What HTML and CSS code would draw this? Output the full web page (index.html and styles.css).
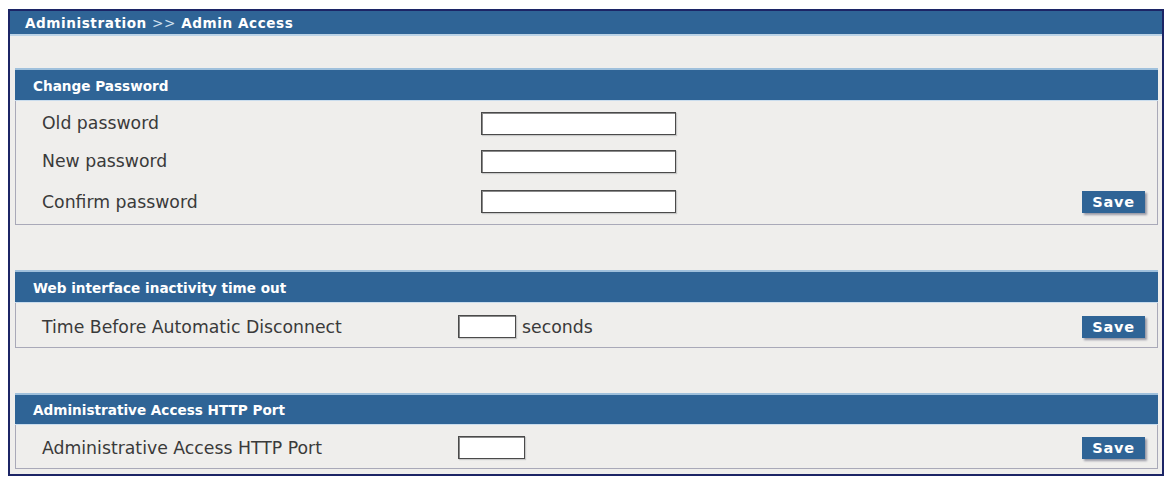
FILE: index.html
```html
<!DOCTYPE html>
<html>
<head>
<meta charset="utf-8">
<link rel="stylesheet" href="styles.css">
</head>
<body>
<div class="frame">
  <div class="title">Administration <span class="sep">&gt;&gt;</span> Admin Access</div>
  <div class="content">
    <div class="section s1">
      <div class="shead">Change Password</div>
      <div class="sbody">
        <div class="row r1"><span class="label">Old password</span><span class="field"><input class="inp wide" type="password"></span><span></span></div>
        <div class="row r2"><span class="label">New password</span><span class="field"><input class="inp wide" type="password"></span><span></span></div>
        <div class="row r3"><span class="label">Confirm password</span><span class="field"><input class="inp wide" type="password"></span><button class="save">Save</button></div>
      </div>
    </div>
    <div class="section s2">
      <div class="shead">Web interface inactivity time out</div>
      <div class="sbody">
        <div class="row narrowcol r4"><span class="label">Time Before Automatic Disconnect</span><span class="field"><input class="inp small" type="text"><span class="unit">seconds</span></span><button class="save">Save</button></div>
      </div>
    </div>
    <div class="section s3">
      <div class="shead">Administrative Access HTTP Port</div>
      <div class="sbody">
        <div class="row narrowcol r5"><span class="label">Administrative Access HTTP Port</span><span class="field"><input class="inp port" type="text"></span><button class="save">Save</button></div>
      </div>
    </div>
  </div>
</div>
</body>
</html>
```
FILE: styles.css
```css
* { box-sizing: border-box; }
html, body { margin: 0; padding: 0; background: #ffffff; }
body { font-family: "DejaVu Sans", Verdana, sans-serif; }

.frame {
  margin: 9px 0 0 8px;
  width: 1156px;
  height: 467px;
  border: 2px solid #1c2566;
  background: #efeeec;
  display: flex;
  flex-direction: column;
}

.title {
  height: 25px;
  background: #2f6496;
  border-bottom: 2px solid #bcd3e6;
  color: #ffffff;
  font-weight: bold;
  font-size: 13.6px;
  letter-spacing: 0.55px;
  padding: 5px 0 0 15px;
  line-height: 15px;
}
.title .sep { color: #cfe0f0; font-weight: normal; }

.content {
  padding: 32px 4px 0 5px;
  display: flex;
  flex-direction: column;
}

.section {
  border: 1px solid #a9a9b8;
  border-top: none;
  background: #efeeec;
}
.s2 { margin-top: 45px; }
.s3 { margin-top: 45px; }

.shead {
  height: 33px;
  background: #2f6496;
  border-top: 2px solid #9fc0dc;
  border-bottom: 1px solid #c9dced;
  margin: 0 -1px;
  color: #ffffff;
  font-weight: bold;
  font-size: 13.6px;
  padding: 8px 0 0 18px;
  line-height: 16px;
}
.s3 .shead { height: 32px; padding-top: 7px; }

.row {
  display: grid;
  grid-template-columns: 439px 1fr 63px;
  align-items: center;
  padding: 0 12px 0 26px;
  font-size: 17.3px;
  color: #3a3a3a;
}
.row.narrowcol { grid-template-columns: 416px 1fr 63px; }
.r1 { height: 40px; padding-top: 4px; }
.r2 { height: 40px; }
.r3 { height: 43px; padding-bottom: 2px; }
.r4 { height: 44px; padding-top: 3px; }
.r5 { height: 43px; padding-top: 2px; }

.field { display: flex; align-items: center; }

.inp {
  display: block;
  height: 23px;
  margin: 0;
  border: 1px solid #4a4a4a;
  box-shadow: inset 1px 1px 0 #8a8a8a, 1px 1px 1px #c8c8c8;
  background: #ffffff;
  padding: 0;
}
.inp.wide { width: 195px; }
.inp.small { width: 58px; }
.inp.port { width: 67px; }

.unit { margin-left: 6px; color: #3a3a3a; }

.save {
  width: 63px;
  height: 22px;
  margin: 0;
  padding: 0;
  border: none;
  background: #2f6496;
  color: #ffffff;
  font-family: "DejaVu Sans", Verdana, sans-serif;
  font-weight: bold;
  font-size: 14.5px;
  letter-spacing: 0.8px;
  box-shadow: 2px 2px 2px #9a9aa6;
}
```
